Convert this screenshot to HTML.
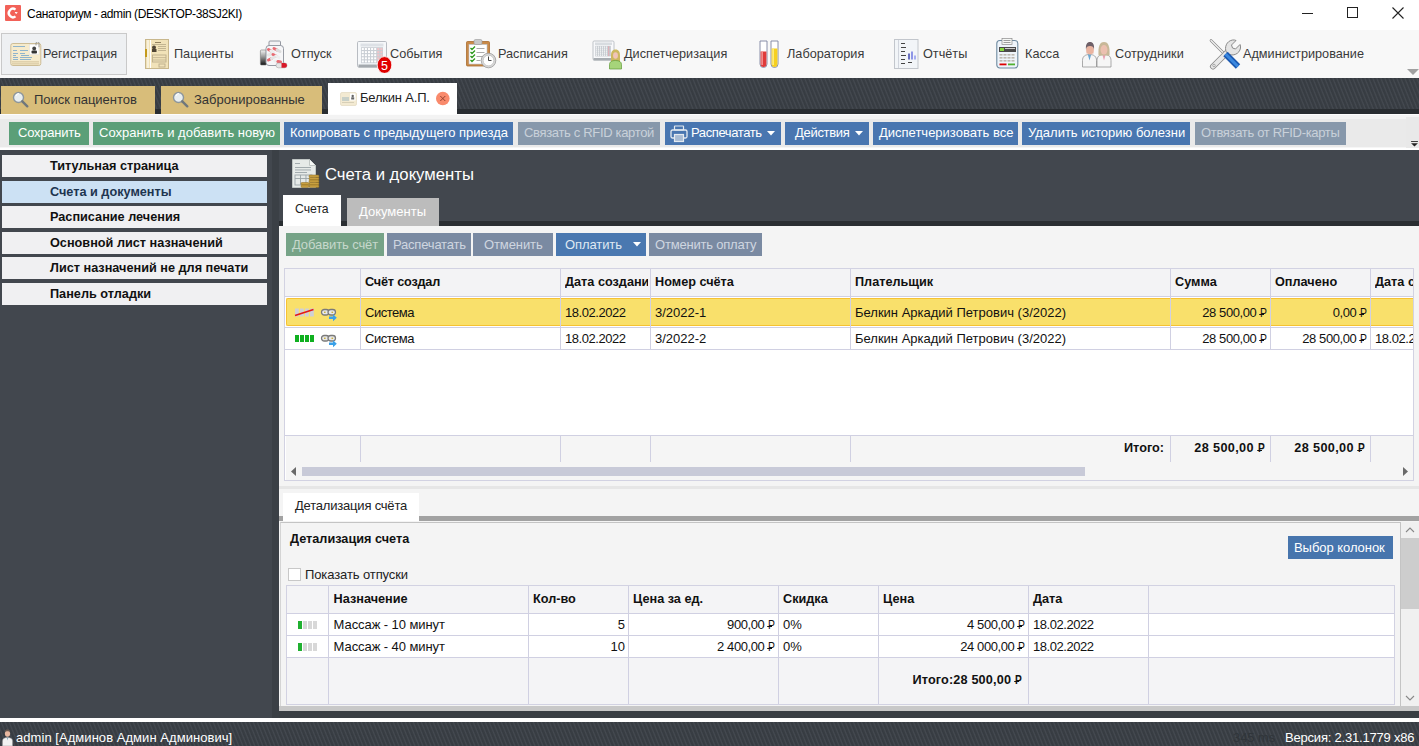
<!DOCTYPE html>
<html><head><meta charset="utf-8">
<style>
*{margin:0;padding:0;box-sizing:border-box}
html,body{width:1419px;height:746px;overflow:hidden;background:#42474e;font-family:"Liberation Sans",sans-serif;font-size:13px;color:#111}
.a{position:absolute}
.t{position:absolute;white-space:nowrap;line-height:1}
#title{left:0;top:0;width:1419px;height:30px;background:#fff}
#ribbon{left:0;top:30px;width:1419px;height:48px;background:#f8f8f8}
.stripes{background:repeating-linear-gradient(68deg,#363b41 0px,#393e44 1.6px,#454a51 2.6px,#393e44 3.71px)}
#band{left:0;top:78px;width:1419px;height:36px}
#band .bot{left:0;top:31px;width:1419px;height:5px;background:#292d31}
.tab{position:absolute;background:#d8bd7a;height:28px;top:86px}
#toolbar{left:0;top:114px;width:1419px;height:36px;background:linear-gradient(#fdfdfd 0,#fdfdfd 1px,#f3f3f3 1px,#f3f3f3 5px,#eaeaea 5px,#eaeaea 33px,#f6f6f6 33px,#f6f6f6 34px,#fff 34px)}
.btn{position:absolute;height:23px;top:122px;color:#fff;font-size:13px;line-height:21px;white-space:nowrap}
.g{background:#5b9f78}
.b{background:#4976b0}
.gr{background:#8798ab;color:#c9d1da}
.nav{position:absolute;left:2px;width:265px;height:22px;background:#f0f0f2;font-weight:bold;font-size:12.7px;line-height:22px;padding-left:48px;color:#111}
.grid{position:absolute;border:1px solid #d0d0e2;background:#fff}
.hl{position:absolute;background:#d0d0e2}
.hb{font-weight:bold;font-size:12.7px}
.rub{position:relative;display:inline-block;margin-left:0.6px;width:0.52em;transform:scaleX(0.8);transform-origin:0 0;letter-spacing:0}
.rub::after{content:"";position:absolute;left:-0.1em;width:0.5em;top:0.62em;height:0.085em;min-height:1px;background:currentColor}
.rt{top:18px;font-size:12.7px;color:#3a3a3a}
</style></head><body>

<!-- TITLE BAR -->
<div id="title" class="a">
  <div class="a" style="left:5px;top:5px;width:16px;height:16px;background:#f26158;border-radius:1px"></div>
  <svg class="a" style="left:5px;top:5px" width="16" height="16" viewBox="0 0 16 16"><path d="M10.5 4.6 A4.2 4.2 0 1 0 10.5 11.4" fill="none" stroke="#fff" stroke-width="2.4"/><path d="M11.2 7.2c.5-.6 1.6-.3 1.3.6l-1.3 1.2-1.3-1.2c-.3-.9.8-1.2 1.3-.6z" fill="#fff"/></svg>
  <div class="t" style="left:27px;top:8px;font-size:12px;color:#000;letter-spacing:-0.4px">Санаториум - admin (DESKTOP-38SJ2KI)</div>
  <div class="a" style="left:1302px;top:13px;width:11px;height:1px;background:#222"></div>
  <div class="a" style="left:1347px;top:7px;width:11px;height:11px;border:1px solid #222"></div>
  <svg class="a" style="left:1392px;top:7px" width="12" height="12" viewBox="0 0 12 12"><path d="M0.5 0.5L11.5 11.5M11.5 0.5L0.5 11.5" stroke="#222" stroke-width="1.1"/></svg>
</div>

<!-- RIBBON -->
<div id="ribbon" class="a">
  <div class="a" style="left:1px;top:3px;width:126px;height:42px;background:#eef0f2;border:1px solid #c9c9c9"></div>
  <!-- reg icon -->
  <svg class="a" style="left:10px;top:12px" width="32" height="25" viewBox="0 0 32 25">
    <rect x="0.8" y="1.5" width="30" height="22" rx="2" fill="#f6ebcc" stroke="#cdbd96" stroke-width="1"/>
    <rect x="3" y="4" width="12" height="1" fill="#8fb4cc"/>
    <rect x="3" y="8" width="4" height="1" fill="#8fb4cc"/><rect x="10" y="8" width="8" height="1" fill="#8fb4cc"/>
    <rect x="3" y="11" width="5" height="1" fill="#8fb4cc"/><rect x="10" y="11" width="5" height="1" fill="#8fb4cc"/>
    <rect x="3" y="13" width="3" height="1" fill="#8fb4cc"/><rect x="11" y="13" width="8" height="1" fill="#8fb4cc"/>
    <rect x="3" y="15" width="5" height="1" fill="#8fb4cc"/><rect x="10" y="15" width="12" height="1" fill="#8fb4cc"/>
    <rect x="3" y="17" width="5" height="1" fill="#8fb4cc"/><rect x="10" y="17" width="11" height="1" fill="#8fb4cc"/>
    <rect x="2" y="19.5" width="27" height="0.8" fill="#c9b88e"/><rect x="2" y="21.5" width="27" height="0.8" fill="#c9b88e"/>
    <rect x="19.5" y="2.5" width="9.5" height="10" fill="#fff" stroke="#ddd" stroke-width="0.5"/>
    <circle cx="24.2" cy="6.5" r="1.9" fill="#444"/><rect x="21.5" y="8.5" width="5.5" height="3" rx="1" fill="#333"/>
    <path d="M26 3.5v-2.2a1.5 1.5 0 0 1 3 0v4" fill="none" stroke="#888" stroke-width="0.8"/>
  </svg>
  <div class="t rt" style="left:43px">Регистрация</div>
  <!-- patients -->
  <svg class="a" style="left:145px;top:9px" width="24" height="30" viewBox="0 0 24 30">
    <rect x="0.5" y="0.5" width="23" height="29" fill="#f1e2b8" stroke="#c8b78c" stroke-width="1"/>
    <rect x="2.5" y="1" width="1" height="28" fill="#fff"/><rect x="5" y="1" width="1" height="28" fill="#fff"/>
    <rect x="-0.5" y="10" width="2.5" height="8" fill="#c49a1c"/>
    <rect x="10" y="3" width="6" height="0.8" fill="#7a6a4a"/>
    <rect x="7" y="5" width="14" height="0.8" fill="#b8aa88"/>
    <circle cx="9" cy="8.5" r="2" fill="#4e4434"/><rect x="7" y="10" width="4.5" height="3" fill="#4e4434"/>
    <rect x="13" y="7" width="8" height="0.8" fill="#b8aa88"/><rect x="13" y="9" width="8" height="0.8" fill="#b8aa88"/><rect x="13" y="11" width="8" height="0.8" fill="#b8aa88"/>
    <rect x="7.5" y="16" width="13.5" height="7" fill="none" stroke="#bcae8c" stroke-width="0.9"/>
    <rect x="7.5" y="18.3" width="13.5" height="0.8" fill="#bcae8c"/><rect x="7.5" y="20.6" width="13.5" height="0.8" fill="#bcae8c"/>
    <rect x="14" y="25" width="6" height="3" fill="none" stroke="#bcae8c" stroke-width="0.9"/>
  </svg>
  <div class="t rt" style="left:174px">Пациенты</div>
  <!-- otpusk (pills jar) -->
  <svg class="a" style="left:259px;top:10px" width="30" height="30" viewBox="0 0 30 30">
    <defs><linearGradient id="bg1" x1="0" y1="0" x2="0" y2="1"><stop offset="0" stop-color="#f4f4f4"/><stop offset="0.45" stop-color="#999"/><stop offset="1" stop-color="#111"/></linearGradient></defs>
    <rect x="1.4" y="10" width="6" height="15" rx="1" fill="url(#bg1)" stroke="#777" stroke-width="0.6"/>
    <rect x="10" y="1" width="11.5" height="5.5" rx="1" fill="#f2f2f4" stroke="#8a8f99" stroke-width="0.9"/>
    <rect x="7" y="5.5" width="17.5" height="20" rx="3" fill="#f6f6f8" stroke="#8a8f99" stroke-width="0.9"/>
    <g stroke-linecap="round" stroke-width="3">
      <path d="M9.5 9.5l2.5 1.5" stroke="#e86a72"/><path d="M12 11l2.5 1.5" stroke="#eee"/>
      <path d="M15 8.5l3 1.5" stroke="#e86a72"/><path d="M18 10l3 1.5" stroke="#ddd"/>
      <path d="M9.5 15l3 -1" stroke="#e8e8e8"/><path d="M14 14.5l3 1.5" stroke="#e86a72"/><path d="M17 16l3 1.5" stroke="#eee"/>
      <path d="M9.5 20l3 -1.5" stroke="#e86a72"/><path d="M12.5 18.5l3 -1.5" stroke="#e4e4e4"/>
      <path d="M16 21l3 .5" stroke="#eee"/><path d="M19 21.5l2.5 .5" stroke="#e86a72"/>
    </g>
    <rect x="17" y="23" width="11" height="4.8" rx="2.4" fill="#e6e6e6" stroke="#999" stroke-width="0.5"/>
    <path d="M22.5 23h3.1a2.4 2.4 0 0 1 0 4.8h-3.1z" fill="#d81828"/>
  </svg>
  <div class="t rt" style="left:291px">Отпуск</div>
  <!-- events calendar -->
  <svg class="a" style="left:357px;top:11px" width="36" height="32" viewBox="0 0 36 32">
    <rect x="0.5" y="0.5" width="29" height="25.5" rx="1.2" fill="#f6f8fa" stroke="#b8bcc2" stroke-width="1"/>
    <rect x="1.5" y="23.5" width="27.5" height="3" fill="#a4a9ae"/>
    <rect x="3.5" y="2.5" width="23" height="3" fill="#dde1e6"/>
    <rect x="4" y="6.2" width="22" height="16" fill="#c9ced4"/>
    <rect x="4.8" y="7.0" width="2" height="2" fill="#fff"/><rect x="7.9" y="7.0" width="2" height="2" fill="#fff"/><rect x="11.0" y="7.0" width="2" height="2" fill="#fff"/><rect x="14.1" y="7.0" width="2" height="2" fill="#fff"/><rect x="17.2" y="7.0" width="2" height="2" fill="#fff"/><rect x="20.3" y="7.0" width="2" height="2" fill="#f2c4c8"/><rect x="23.4" y="7.0" width="2" height="2" fill="#f2c4c8"/><rect x="4.8" y="10.1" width="2" height="2" fill="#fff"/><rect x="7.9" y="10.1" width="2" height="2" fill="#fff"/><rect x="11.0" y="10.1" width="2" height="2" fill="#fff"/><rect x="14.1" y="10.1" width="2" height="2" fill="#fff"/><rect x="17.2" y="10.1" width="2" height="2" fill="#fff"/><rect x="20.3" y="10.1" width="2" height="2" fill="#f2c4c8"/><rect x="23.4" y="10.1" width="2" height="2" fill="#f2c4c8"/><rect x="4.8" y="13.2" width="2" height="2" fill="#fff"/><rect x="7.9" y="13.2" width="2" height="2" fill="#fff"/><rect x="11.0" y="13.2" width="2" height="2" fill="#fff"/><rect x="14.1" y="13.2" width="2" height="2" fill="#fff"/><rect x="17.2" y="13.2" width="2" height="2" fill="#fff"/><rect x="20.3" y="13.2" width="2" height="2" fill="#f2c4c8"/><rect x="23.4" y="13.2" width="2" height="2" fill="#f2c4c8"/><rect x="4.8" y="16.3" width="2" height="2" fill="#fff"/><rect x="7.9" y="16.3" width="2" height="2" fill="#fff"/><rect x="11.0" y="16.3" width="2" height="2" fill="#fff"/><rect x="14.1" y="16.3" width="2" height="2" fill="#fff"/><rect x="17.2" y="16.3" width="2" height="2" fill="#fff"/><rect x="20.3" y="16.3" width="2" height="2" fill="#f2c4c8"/><rect x="23.4" y="16.3" width="2" height="2" fill="#f2c4c8"/><rect x="4.8" y="19.4" width="2" height="2" fill="#fff"/><rect x="7.9" y="19.4" width="2" height="2" fill="#fff"/><rect x="11.0" y="19.4" width="2" height="2" fill="#fff"/><rect x="14.1" y="19.4" width="2" height="2" fill="#fff"/><rect x="17.2" y="19.4" width="2" height="2" fill="#fff"/><rect x="20.3" y="19.4" width="2" height="2" fill="#f2c4c8"/><rect x="23.4" y="19.4" width="2" height="2" fill="#f2c4c8"/>
    <ellipse cx="27.5" cy="24" rx="7.3" ry="8.4" fill="#e00000" stroke="#fff" stroke-width="0.8"/>
    <text x="27.6" y="28.6" font-family="Liberation Sans" font-size="12.5" fill="#fff" text-anchor="middle">5</text>
  </svg>
  <div class="t rt" style="left:390px">События</div>
  <!-- schedule clipboard -->
  <svg class="a" style="left:466px;top:9px" width="32" height="30" viewBox="0 0 32 30">
    <rect x="0.5" y="2.5" width="23" height="24.5" rx="1" fill="#c98a48" stroke="#a86c30" stroke-width="0.8"/>
    <rect x="3" y="5.5" width="18" height="19.5" fill="#fff" stroke="#b9c4d0" stroke-width="0.6"/>
    <rect x="8" y="0.5" width="8" height="5" rx="1.5" fill="#c8c8c8" stroke="#999" stroke-width="0.6"/>
    <path d="M4.5 9l1.5 1.5 3-3M4.5 13l1.5 1.5 3-3M4.5 17l1.5 1.5 3-3M4.5 21l1.5 1.5 3-3" fill="none" stroke="#2e9a1e" stroke-width="1.3"/>
    <rect x="10.5" y="9" width="8" height="1" fill="#aaa"/><rect x="10.5" y="13" width="8" height="1" fill="#aaa"/><rect x="10.5" y="17" width="7" height="1" fill="#aaa"/><rect x="10.5" y="21" width="4" height="1" fill="#aaa"/>
    <circle cx="22.5" cy="21.5" r="7.3" fill="#d8d8d8" stroke="#999" stroke-width="0.8"/>
    <circle cx="22.5" cy="21.5" r="5.3" fill="#fff" stroke="#aaa" stroke-width="0.5"/>
    <path d="M22.5 17.5v4h3" fill="none" stroke="#333" stroke-width="0.9"/>
  </svg>
  <div class="t rt" style="left:498px">Расписания</div>
  <!-- dispatch -->
  <svg class="a" style="left:592px;top:10px" width="32" height="30" viewBox="0 0 32 30">
    <rect x="1" y="1" width="21" height="19" rx="1.2" fill="#f8f9fb" stroke="#b8bcc2" stroke-width="0.9"/>
    <rect x="1.5" y="18" width="20" height="2.5" fill="#a8adb2"/>
    <rect x="3" y="2.5" width="17" height="2.5" fill="#d8dce0"/>
    <rect x="3.3" y="5.8" width="15.5" height="10.6" fill="#c3c8ce"/>
    <rect x="4" y="6.5" width="1.2" height="1.2" fill="#fff"/><rect x="6" y="6.5" width="1.2" height="1.2" fill="#fff"/><rect x="8" y="6.5" width="1.2" height="1.2" fill="#fff"/><rect x="10" y="6.5" width="1.2" height="1.2" fill="#fff"/><rect x="12" y="6.5" width="1.2" height="1.2" fill="#fff"/><rect x="14" y="6.5" width="1.2" height="1.2" fill="#fff"/><rect x="16" y="6.5" width="1.2" height="1.2" fill="#f0a0a8"/><rect x="4" y="8.5" width="1.2" height="1.2" fill="#fff"/><rect x="6" y="8.5" width="1.2" height="1.2" fill="#fff"/><rect x="8" y="8.5" width="1.2" height="1.2" fill="#fff"/><rect x="10" y="8.5" width="1.2" height="1.2" fill="#fff"/><rect x="12" y="8.5" width="1.2" height="1.2" fill="#fff"/><rect x="14" y="8.5" width="1.2" height="1.2" fill="#fff"/><rect x="16" y="8.5" width="1.2" height="1.2" fill="#f0a0a8"/><rect x="4" y="10.5" width="1.2" height="1.2" fill="#fff"/><rect x="6" y="10.5" width="1.2" height="1.2" fill="#fff"/><rect x="8" y="10.5" width="1.2" height="1.2" fill="#fff"/><rect x="10" y="10.5" width="1.2" height="1.2" fill="#fff"/><rect x="12" y="10.5" width="1.2" height="1.2" fill="#fff"/><rect x="14" y="10.5" width="1.2" height="1.2" fill="#fff"/><rect x="16" y="10.5" width="1.2" height="1.2" fill="#f0a0a8"/><rect x="4" y="12.5" width="1.2" height="1.2" fill="#fff"/><rect x="6" y="12.5" width="1.2" height="1.2" fill="#fff"/><rect x="8" y="12.5" width="1.2" height="1.2" fill="#fff"/><rect x="10" y="12.5" width="1.2" height="1.2" fill="#fff"/><rect x="12" y="12.5" width="1.2" height="1.2" fill="#fff"/><rect x="14" y="12.5" width="1.2" height="1.2" fill="#fff"/><rect x="16" y="12.5" width="1.2" height="1.2" fill="#f0a0a8"/><rect x="4" y="14.5" width="1.2" height="1.2" fill="#fff"/><rect x="6" y="14.5" width="1.2" height="1.2" fill="#fff"/><rect x="8" y="14.5" width="1.2" height="1.2" fill="#fff"/><rect x="10" y="14.5" width="1.2" height="1.2" fill="#fff"/><rect x="12" y="14.5" width="1.2" height="1.2" fill="#fff"/><rect x="14" y="14.5" width="1.2" height="1.2" fill="#fff"/><rect x="16" y="14.5" width="1.2" height="1.2" fill="#f0a0a8"/>
    <path d="M23.5 9.5c-3.2 0-4.5 2.5-4.5 6v6.5h9v-6.5c0-3.5-1.3-6-4.5-6z" fill="#cdb860"/>
    <ellipse cx="23.5" cy="15.5" rx="2.4" ry="3.3" fill="#f0c4b8"/>
    <path d="M17.5 29v-4.5c0-2.5 2-4 6-4s6 1.5 6 4v4.5z" fill="#a6d47a" stroke="#5e9a38" stroke-width="0.7"/>
  </svg>
  <div class="t rt" style="left:624px">Диспетчеризация</div>
  <!-- lab tubes -->
  <svg class="a" style="left:759px;top:10px" width="21" height="29" viewBox="0 0 21 29">
    <path d="M1 1h7v23a3.5 3.5 0 0 1-7 0z" fill="#fff" stroke="#7d83a0" stroke-width="0.9"/>
    <path d="M12 1h7v23a3.5 3.5 0 0 1-7 0z" fill="#fff" stroke="#7d83a0" stroke-width="0.9"/>
    <path d="M1.6 11.5h5.8v12.5a2.9 2.9 0 0 1-5.8 0z" fill="#e03a3a"/>
    <path d="M12.6 8.5h5.8v15.5a2.9 2.9 0 0 1-5.8 0z" fill="#f6d020"/>
    <rect x="2.5" y="12" width="1.2" height="13" fill="#f7b0b0"/><rect x="13.5" y="9" width="1.2" height="16" fill="#fff7a0"/>
  </svg>
  <div class="t rt" style="left:787px">Лаборатория</div>
  <!-- reports -->
  <svg class="a" style="left:894px;top:9px" width="25" height="30" viewBox="0 0 25 30">
    <rect x="0.5" y="0.5" width="23.5" height="29" fill="#f2f5f8" stroke="#c2c6cc" stroke-width="1"/>
    <rect x="4" y="1" width="0.8" height="28" fill="#c8ced6"/>
    <g fill="#444"><rect x="7" y="4" width="4" height="1"/><rect x="7" y="8" width="5" height="1"/><rect x="7" y="12" width="4" height="1"/><rect x="7" y="16" width="5" height="1"/><rect x="7" y="20" width="4" height="1"/><rect x="7" y="24" width="4" height="1"/><rect x="14" y="23" width="4" height="1"/></g>
    <rect x="14" y="14.5" width="2" height="6" fill="#6870c0"/><rect x="17" y="12.5" width="2" height="8" fill="#8e96e6"/><rect x="20" y="16.5" width="2" height="4" fill="#a8aef0"/>
  </svg>
  <div class="t rt" style="left:923px">Отчёты</div>
  <!-- kassa -->
  <svg class="a" style="left:996px;top:8px" width="23" height="31" viewBox="0 0 23 31">
    <rect x="0.8" y="2.5" width="21" height="27.5" rx="3" fill="#eef4fa" stroke="#6e8aa0" stroke-width="1.1"/>
    <rect x="6" y="0.5" width="10" height="6" fill="#f6f8f6" stroke="#8a8a8a" stroke-width="0.7"/>
    <rect x="7.5" y="2" width="7" height="0.8" fill="#888"/><rect x="7.5" y="4" width="7" height="0.8" fill="#888"/>
    <rect x="3" y="9" width="17" height="5" fill="#4a4a4a"/><rect x="4" y="10" width="4" height="3" fill="#86d640"/><rect x="9" y="10" width="10" height="1" fill="#ccc"/>
    <g fill="#bdb8b0"><rect x="3.5" y="16" width="3" height="1.6"/><rect x="7.5" y="16" width="3" height="1.6"/><rect x="11.5" y="16" width="3" height="1.6"/><rect x="15.5" y="16" width="3" height="1.6"/>
    <rect x="3.5" y="19" width="3" height="1.6"/><rect x="7.5" y="19" width="3" height="1.6"/><rect x="11.5" y="19" width="3" height="1.6"/><rect x="15.5" y="19" width="3" height="1.6"/>
    <rect x="3.5" y="22" width="3" height="1.6"/><rect x="7.5" y="22" width="3" height="1.6"/><rect x="11.5" y="22" width="3" height="1.6"/><rect x="15.5" y="22" width="3" height="1.6"/></g>
    <rect x="3.5" y="25.5" width="7" height="1.8" fill="#d00"/><rect x="12" y="25.5" width="7" height="1.8" fill="#50b030"/>
  </svg>
  <div class="t rt" style="left:1025px">Касса</div>
  <!-- staff -->
  <svg class="a" style="left:1082px;top:11px" width="30" height="27" viewBox="0 0 30 27">
    <path d="M0.5 26v-6.5c0-4 2.5-6 7-6s7 2 7 6v6.5z" fill="#f6f6f6" stroke="#8a8a8a" stroke-width="0.7"/>
    <path d="M5.8 13.5h3.4l-1.7 6z" fill="#6aa6d0"/>
    <path d="M4.5 12.5c0-6 1-9.5 3.5-9.5s3.5 3.5 3.5 9.5z" fill="#e8aa94"/>
    <ellipse cx="8" cy="8.5" rx="3.8" ry="5" fill="#eab4a0"/>
    <path d="M4 8.5c-.5-5 1-7.5 4-7.5s4.5 2.5 4 7.5c-.3-2.5-1.5-3.5-4-3.5s-3.7 1-4 3.5z" fill="#6e6068"/>
    <path d="M15 26v-6.5c0-4 2.5-6 7-6s7 2 7 6v6.5z" fill="#f6f6f6" stroke="#8a8a8a" stroke-width="0.7"/>
    <path d="M20.3 13.5h3.4l-1.7 6z" fill="#e8a0b4"/>
    <path d="M16.5 14.5c-.5-9 1-13.5 5.5-13.5s6 4.5 5.5 13.5z" fill="#c8b898"/>
    <ellipse cx="22" cy="8.8" rx="3.5" ry="4.8" fill="#ecc0b0"/>
  </svg>
  <div class="t rt" style="left:1115px">Сотрудники</div>
  <!-- admin tools -->
  <svg class="a" style="left:1209px;top:8px" width="34" height="32" viewBox="0 0 34 32">
    <path d="M2 2.5l14.5 14.5" stroke="#8a8a8a" stroke-width="2.6" stroke-linecap="round"/>
    <path d="M2 2.5l14.5 14.5" stroke="#f4f4f4" stroke-width="1.2" stroke-linecap="round"/>
    <path d="M4 28.5L19.5 13" stroke="#8a8a8a" stroke-width="6" stroke-linecap="round"/>
    <path d="M4 28.5L19.5 13" stroke="#e8e8e8" stroke-width="4.4" stroke-linecap="round"/>
    <circle cx="5" cy="27.5" r="1.3" fill="none" stroke="#999" stroke-width="0.8"/>
    <path d="M17.5 14.5c-2.5-5 0-11.5 6-12.5 1.5-.2 2.5 0 3.5.5l-4.5 4.5 1 3 3 1 4.5-4.5c.5 1 .7 2 .5 3.5-1 6-7.5 8.5-12.5 6z" fill="#e4e4e4" stroke="#8a8a8a" stroke-width="1"/>
    <path d="M16.5 16l12.5 12.5" stroke="#1a58b0" stroke-width="6.2" stroke-linecap="butt"/>
    <path d="M16.5 16l12.5 12.5" stroke="#3a88e0" stroke-width="3" stroke-linecap="butt"/>
  </svg>
  <div class="t rt" style="left:1243px">Администрирование</div>
  <svg class="a" style="left:1407px;top:39px" width="12" height="6" viewBox="0 0 12 6"><path d="M0 0h12l-6 6z" fill="#a0a0a0"/></svg>
</div>

<!-- DARK BAND WITH TABS -->
<div id="band" class="a stripes"><div class="a bot"></div></div>
<div class="tab" style="left:1px;width:154px"></div>
<svg class="a" style="left:12px;top:91px" width="17" height="17" viewBox="0 0 17 17"><circle cx="6.5" cy="6.5" r="5" fill="#e8eef0" stroke="#8d969c" stroke-width="1.4"/><path d="M10.3 10.3l5 5" stroke="#6f777c" stroke-width="2.4" stroke-linecap="round"/><path d="M4 5a3 3 0 0 1 3-2.5" stroke="#fff" stroke-width="1" fill="none"/></svg>
<div class="t" style="left:34px;top:93px;font-size:13px;color:#333">Поиск пациентов</div>
<div class="tab" style="left:161px;width:161px"></div>
<svg class="a" style="left:172px;top:91px" width="17" height="17" viewBox="0 0 17 17"><circle cx="6.5" cy="6.5" r="5" fill="#e8eef0" stroke="#8d969c" stroke-width="1.4"/><path d="M10.3 10.3l5 5" stroke="#6f777c" stroke-width="2.4" stroke-linecap="round"/><path d="M4 5a3 3 0 0 1 3-2.5" stroke="#fff" stroke-width="1" fill="none"/></svg>
<div class="t" style="left:194px;top:93px;font-size:13px;color:#333">Забронированные</div>
<div class="a" style="left:328px;top:83px;width:129px;height:31px;background:#fff"></div>
<svg class="a" style="left:340px;top:92px" width="17" height="14" viewBox="0 0 17 14"><rect x="0.5" y="0.5" width="16" height="13" rx="1.5" fill="#f3ead2" stroke="#e4dcc4" stroke-width="0.8"/><rect x="2" y="5" width="7" height="4" fill="#c8d0c8"/><rect x="2" y="10" width="12" height="0.9" fill="#d4ccb4"/><rect x="10" y="1.5" width="5.5" height="7" fill="#fff"/><circle cx="12.7" cy="4" r="1.2" fill="#666"/><rect x="11.2" y="5.3" width="3" height="2.2" fill="#666"/></svg>
<div class="t" style="left:360px;top:91px;font-size:13px;color:#222;letter-spacing:-0.2px">Белкин А.П.</div>
<svg class="a" style="left:435px;top:91px" width="15" height="15" viewBox="0 0 15 15"><circle cx="7.8" cy="7.5" r="6.8" fill="#f98a6c"/><path d="M5.3 5l5 5M10.3 5l-5 5" stroke="#8a3a28" stroke-width="0.9"/></svg>

<!-- TOOLBAR -->
<div id="toolbar" class="a"></div>
<div class="btn g" style="left:9px;width:80px;padding-left:9px;letter-spacing:-0.23px">Сохранить</div>
<div class="btn g" style="left:93px;width:187px;padding-left:6px">Сохранить и добавить новую</div>
<div class="btn b" style="left:284px;width:229px;padding-left:6px">Копировать с предыдущего приезда</div>
<div class="btn gr" style="left:518px;width:142px;padding-left:6px;letter-spacing:-0.33px">Связать с RFID картой</div>
<div class="btn b" style="left:665px;width:116px;padding-left:26px;letter-spacing:-0.4px">Распечатать</div>
<svg class="a" style="left:670px;top:125px" width="18" height="18" viewBox="0 0 18 18"><rect x="4.5" y="1" width="9" height="4" rx="0.5" fill="none" stroke="#e4eaf0" stroke-width="1.2"/><path d="M4 13H2.5a1.5 1.5 0 0 1-1.5-1.5v-5A1.5 1.5 0 0 1 2.5 5h13A1.5 1.5 0 0 1 17 6.5v5a1.5 1.5 0 0 1-1.5 1.5H14" fill="none" stroke="#e4eaf0" stroke-width="1.3"/><rect x="4.5" y="9.5" width="9" height="7" fill="#a8bcd4" stroke="#e4eaf0" stroke-width="1.2"/></svg>
<svg class="a" style="left:767px;top:131px" width="8" height="5" viewBox="0 0 8 5"><path d="M0 0h8l-4 4.5z" fill="#fff"/></svg>
<div class="btn b" style="left:785px;width:84px;padding-left:10px;letter-spacing:-0.3px">Действия</div>
<svg class="a" style="left:855px;top:131px" width="8" height="5" viewBox="0 0 8 5"><path d="M0 0h8l-4 4.5z" fill="#fff"/></svg>
<div class="btn b" style="left:873px;width:145px;padding-left:6px">Диспетчеризовать все</div>
<div class="btn b" style="left:1022px;width:168px;padding-left:6px">Удалить историю болезни</div>
<div class="btn gr" style="left:1195px;width:151px;padding-left:6px;letter-spacing:-0.33px">Отвязать от RFID-карты</div>
<div class="a" style="left:1406px;top:117px;width:13px;height:31px;background:#e9e9e9"></div>
<svg class="a" style="left:1411px;top:141px" width="7" height="6" viewBox="0 0 8 7"><rect x="0" y="0" width="8" height="1" fill="#222"/><path d="M0 2.5h8l-4 4z" fill="#222"/></svg>

<!-- LEFT NAV -->
<div class="nav" style="top:155px">Титульная страница</div>
<div class="nav" style="top:181px;background:#cce1f4;color:#1e3550">Счета и документы</div>
<div class="nav" style="top:206px">Расписание лечения</div>
<div class="nav" style="top:232px">Основной лист назначений</div>
<div class="nav" style="top:257px">Лист назначений не для печати</div>
<div class="nav" style="top:283px">Панель отладки</div>

<!-- CONTENT -->
<div class="a" style="left:272px;top:150px;width:7px;height:568px;background:#3b4046"></div>
<div class="a" style="left:279px;top:226px;width:1140px;height:480px;background:#f4f4f4"></div>
<svg class="a" style="left:291px;top:158px" width="29" height="32" viewBox="0 0 29 32">
<path d="M1.5 1.5h17l6 6v22h-23z" fill="#e6eae8" stroke="#c0c6c4" stroke-width="1"/><path d="M18.5 1.5v6h6" fill="#f6f8f6" stroke="#c0c6c4" stroke-width="1"/>
<g fill="#9aa4a8"><rect x="4" y="5" width="5" height="0.9"/><rect x="4" y="9" width="16" height="0.9"/><rect x="4" y="11.5" width="16" height="0.9"/><rect x="4" y="14" width="12" height="0.9"/></g>
<rect x="4" y="17" width="17" height="10" fill="none" stroke="#9aa4a8" stroke-width="0.9"/><rect x="4" y="20" width="17" height="0.9" fill="#9aa4a8"/><rect x="9" y="17" width="0.9" height="10" fill="#9aa4a8"/><rect x="14.5" y="17" width="0.9" height="10" fill="#9aa4a8"/>
<g fill="#c8a040" stroke="#8a6a20" stroke-width="0.5"><rect x="18" y="19.5" width="10" height="2.4" rx="1"/><rect x="18" y="22" width="10" height="2.4" rx="1"/><rect x="18" y="24.5" width="10" height="2.4" rx="1"/><rect x="18" y="27" width="10" height="2.4" rx="1"/><rect x="10" y="24.5" width="8" height="2.4" rx="1"/><rect x="10" y="27" width="8" height="2.4" rx="1"/><rect x="18" y="17" width="10" height="2.4" rx="1"/></g>
</svg>
<div class="t" style="top:166.86px;font-size:16.7px;color:#fff;left:325px;">Счета и документы</div>
<div class="a" style="left:279px;top:221px;width:1140px;height:5px;background:#2a2e32"></div>
<div class="a" style="left:283px;top:195px;width:58px;height:31px;background:#fff"></div>
<div class="t" style="top:203.07px;font-size:12.2px;color:#222;left:295px;">Счета</div>
<div class="a" style="left:347px;top:198px;width:92px;height:28px;background:#bcbcbc"></div>
<div class="t" style="top:204.7px;font-size:13px;color:#fff;left:359px;">Документы</div>
<div class="a" style="left:286px;top:233px;width:98px;height:23px;background:#76a387"></div>
<div class="t" style="top:238px;font-size:13px;color:#c6d8cc;left:292px;letter-spacing:-0.1px">Добавить счёт</div>
<div class="a" style="left:387px;top:233px;width:84px;height:23px;background:#7a8aa2"></div>
<div class="t" style="top:238.0px;font-size:13px;color:#cfd6e0;left:393px;letter-spacing:-0.2px">Распечатать</div>
<div class="a" style="left:473px;top:233px;width:80px;height:23px;background:#7a8aa2"></div>
<div class="t" style="top:238.0px;font-size:13px;color:#cfd6e0;left:484px;letter-spacing:-0.1px">Отменить</div>
<div class="a" style="left:556px;top:233px;width:90px;height:23px;background:#4a78b0"></div>
<div class="t" style="top:238.0px;font-size:13px;color:#dfe8f2;left:565px;letter-spacing:-0.1px">Оплатить</div>
<svg class="a" style="left:633px;top:242px" width="8" height="5" viewBox="0 0 8 5"><path d="M0 0h8l-4 4.5z" fill="#fff"/></svg>
<div class="a" style="left:649px;top:233px;width:113px;height:23px;background:#7a8aa2"></div>
<div class="t" style="top:238.0px;font-size:13px;color:#cfd6e0;left:655px;letter-spacing:-0.2px">Отменить оплату</div>
<div class="a" style="left:284px;top:268px;width:1130px;height:213px;background:#fff;border:1px solid #d2d2e2"></div>
<div class="a" style="left:285px;top:269px;width:1128px;height:27px;background:#f3f3f5"></div>
<div class="hl" style="left:285px;top:296px;width:1128px;height:1px"></div>
<div class="a" style="left:286px;top:298px;width:1127px;height:28px;background:#f9e06b;border:1px solid #f6c232;border-right:none;border-radius:2px 0 0 2px"></div>
<div class="hl" style="left:285px;top:349px;width:1128px;height:1px"></div>
<div class="hl" style="left:285px;top:327px;width:1128px;height:1px"></div>
<div class="hl" style="left:285px;top:435px;width:1128px;height:1px"></div>
<div class="a" style="left:286px;top:436px;width:1127px;height:44px;background:#f5f5f5"></div>
<div class="hl" style="left:360px;top:269px;width:1px;height:81px"></div>
<div class="hl" style="left:360px;top:436px;width:1px;height:26px"></div>
<div class="hl" style="left:560px;top:269px;width:1px;height:81px"></div>
<div class="hl" style="left:560px;top:436px;width:1px;height:26px"></div>
<div class="hl" style="left:650px;top:269px;width:1px;height:81px"></div>
<div class="hl" style="left:650px;top:436px;width:1px;height:26px"></div>
<div class="hl" style="left:850px;top:269px;width:1px;height:81px"></div>
<div class="hl" style="left:850px;top:436px;width:1px;height:26px"></div>
<div class="hl" style="left:1170px;top:269px;width:1px;height:81px"></div>
<div class="hl" style="left:1170px;top:436px;width:1px;height:26px"></div>
<div class="hl" style="left:1270px;top:269px;width:1px;height:81px"></div>
<div class="hl" style="left:1270px;top:436px;width:1px;height:26px"></div>
<div class="hl" style="left:1370px;top:269px;width:1px;height:81px"></div>
<div class="hl" style="left:1370px;top:436px;width:1px;height:26px"></div>
<svg class="a" style="left:290px;top:467px" width="7" height="9" viewBox="0 0 7 9"><path d="M6 0v9L1 4.5z" fill="#6a6a6a"/></svg>
<div class="a" style="left:302px;top:467px;width:783px;height:9px;background:#c8cad8"></div>
<svg class="a" style="left:1402px;top:467px" width="7" height="9" viewBox="0 0 7 9"><path d="M1 0v9L6 4.5z" fill="#6a6a6a"/></svg>
<div class="t" style="top:275.55px;font-size:12.7px;color:#111;font-weight:bold;left:365px;letter-spacing:-0.2px">Счёт создал</div>
<div class="t" style="top:275.55px;font-size:12.7px;color:#111;font-weight:bold;left:565px;width:83px;overflow:hidden;">Дата создани</div>
<div class="t" style="top:275.55px;font-size:12.7px;color:#111;font-weight:bold;left:655px;">Номер счёта</div>
<div class="t" style="top:275.55px;font-size:12.7px;color:#111;font-weight:bold;left:855px;">Плательщик</div>
<div class="t" style="top:275.55px;font-size:12.7px;color:#111;font-weight:bold;left:1175px;">Сумма</div>
<div class="t" style="top:275.55px;font-size:12.7px;color:#111;font-weight:bold;left:1275px;">Оплачено</div>
<div class="t" style="top:275.55px;font-size:12.7px;color:#111;font-weight:bold;left:1375px;width:38px;overflow:hidden;">Дата создания</div>
<div class="t" style="top:306.0px;font-size:13px;color:#111;left:365px;letter-spacing:-0.5px">Система</div>
<div class="t" style="top:306.0px;font-size:13px;color:#111;left:565px;letter-spacing:-0.45px">18.02.2022</div>
<div class="t" style="top:306.0px;font-size:13px;color:#111;left:655px;">3/2022-1</div>
<div class="t" style="top:306.0px;font-size:13px;color:#111;left:855px;letter-spacing:0px">Белкин Аркадий Петрович (3/2022)</div>
<div class="t" style="top:306.0px;font-size:13px;color:#111;right:152px;letter-spacing:-0.4px">28 500,00 <span class="rub">Р</span></div>
<div class="t" style="top:332.0px;font-size:13px;color:#111;left:365px;letter-spacing:-0.5px">Система</div>
<div class="t" style="top:332.0px;font-size:13px;color:#111;left:565px;letter-spacing:-0.45px">18.02.2022</div>
<div class="t" style="top:332.0px;font-size:13px;color:#111;left:655px;">3/2022-2</div>
<div class="t" style="top:332.0px;font-size:13px;color:#111;left:855px;letter-spacing:0px">Белкин Аркадий Петрович (3/2022)</div>
<div class="t" style="top:332.0px;font-size:13px;color:#111;right:152px;letter-spacing:-0.4px">28 500,00 <span class="rub">Р</span></div>
<div class="t" style="top:306.0px;font-size:13px;color:#111;right:52px;letter-spacing:-0.4px">0,00 <span class="rub">Р</span></div>
<div class="t" style="top:332.0px;font-size:13px;color:#111;right:52px;letter-spacing:-0.4px">28 500,00 <span class="rub">Р</span></div>
<div class="t" style="top:332.0px;font-size:13px;color:#111;left:1375px;width:38px;overflow:hidden;letter-spacing:-0.45px">18.02.2022</div>
<div class="t" style="top:441.85px;font-size:12.7px;color:#111;font-weight:bold;right:255px;">Итого:</div>
<div class="t" style="top:441.85px;font-size:12.7px;color:#111;font-weight:bold;right:154px;letter-spacing:0.35px">28 500,00 <span class="rub">Р</span></div>
<div class="t" style="top:441.85px;font-size:12.7px;color:#111;font-weight:bold;right:54px;letter-spacing:0.35px">28 500,00 <span class="rub">Р</span></div>
<svg class="a" style="left:294px;top:307px" width="22" height="12" viewBox="0 0 22 12"><g fill="#cfcfd6"><rect x="1" y="1.5" width="3.8" height="8"/><rect x="6" y="1.5" width="3.8" height="8"/><rect x="11" y="1.5" width="3.8" height="8"/><rect x="16" y="1.5" width="3.8" height="8"/></g><path d="M1 8.5L19.5 2.5" stroke="#e41818" stroke-width="1.8"/></svg>
<svg class="a" style="left:320px;top:308px" width="18" height="14" viewBox="0 0 18 14"><rect x="1.5" y="1.5" width="7.5" height="5.5" rx="2.75" fill="#e8e8e8" stroke="#7a7a7a" stroke-width="1.3"/><rect x="8" y="1.5" width="7.5" height="5.5" rx="2.75" fill="#e8e8e8" stroke="#7a7a7a" stroke-width="1.3"/><rect x="4" y="3.6" width="1.6" height="1.4" fill="#c8b040"/><rect x="11.5" y="3.6" width="1.6" height="1.4" fill="#c8b040"/><path d="M9 8.5h4v-2.2l3.8 3.4-3.8 3.5v-2.2h-4z" fill="#3aa0e8"/></svg>
<svg class="a" style="left:320px;top:334px" width="18" height="14" viewBox="0 0 18 14"><rect x="1.5" y="1.5" width="7.5" height="5.5" rx="2.75" fill="#e8e8e8" stroke="#7a7a7a" stroke-width="1.3"/><rect x="8" y="1.5" width="7.5" height="5.5" rx="2.75" fill="#e8e8e8" stroke="#7a7a7a" stroke-width="1.3"/><rect x="4" y="3.6" width="1.6" height="1.4" fill="#c8b040"/><rect x="11.5" y="3.6" width="1.6" height="1.4" fill="#c8b040"/><path d="M9 8.5h4v-2.2l3.8 3.4-3.8 3.5v-2.2h-4z" fill="#3aa0e8"/></svg>
<svg class="a" style="left:294px;top:334px" width="22" height="10" viewBox="0 0 22 10"><g fill="#10b020"><rect x="1" y="1" width="4" height="7"/><rect x="6" y="1" width="4" height="7"/><rect x="11" y="1" width="4" height="7"/><rect x="16" y="1" width="4" height="7"/></g></svg>
<div class="a" style="left:279px;top:486px;width:1140px;height:3px;background:#e6e6e6"></div>
<div class="a" style="left:279px;top:516px;width:1140px;height:5px;background:#a2a2a2"></div>
<div class="a" style="left:283px;top:493px;width:136px;height:28px;background:#fff"></div>
<div class="t" style="top:498.8px;font-size:13px;color:#222;left:295px;letter-spacing:-0.2px">Детализация счёта</div>
<div class="a" style="left:280px;top:522px;width:1121px;height:185px;background:#f4f4f4;border:1px solid #c4c4c4;border-left:1px solid #d4d4d4"></div>
<div class="a" style="left:279px;top:706px;width:1140px;height:5px;background:#c8c8c8"></div>
<div class="a" style="left:279px;top:711px;width:1140px;height:7px;background:#3a3f44"></div>
<div class="a" style="left:1401px;top:522px;width:18px;height:184px;background:#f0f0f0"></div>
<div class="a" style="left:1401px;top:538px;width:18px;height:71px;background:#cdcdcd"></div>
<svg class="a" style="left:1405px;top:527px" width="10" height="6" viewBox="0 0 10 6"><path d="M1 5l4-4 4 4" fill="none" stroke="#888" stroke-width="1.1"/></svg>
<svg class="a" style="left:1405px;top:695px" width="10" height="6" viewBox="0 0 10 6"><path d="M1 1l4 4 4-4" fill="none" stroke="#888" stroke-width="1.1"/></svg>
<div class="t" style="top:533.4px;font-size:12.7px;color:#111;font-weight:bold;left:290px;letter-spacing:0px">Детализация счета</div>
<div class="a" style="left:288px;top:568px;width:13px;height:13px;background:#fff;border:1px solid #c8c8c8"></div>
<div class="t" style="top:567.7px;font-size:13px;color:#222;left:305px;letter-spacing:-0.1px">Показать отпуски</div>
<div class="a" style="left:1288px;top:536px;width:105px;height:23px;background:#4775ad"></div>
<div class="t" style="top:540.7px;font-size:13px;color:#fff;left:1294px;letter-spacing:-0.05px">Выбор колонок</div>
<div class="a" style="left:286px;top:585px;width:1109px;height:120px;background:#f4f4f6;border:1px solid #d2d2e2"></div>
<div class="a" style="left:287px;top:613px;width:1107px;height:44px;background:#fff"></div>
<div class="hl" style="left:286px;top:613px;width:1108px;height:1px"></div>
<div class="hl" style="left:286px;top:635px;width:1108px;height:1px"></div>
<div class="hl" style="left:286px;top:657px;width:1108px;height:1px"></div>
<div class="hl" style="left:328px;top:586px;width:1px;height:118px"></div>
<div class="hl" style="left:528px;top:586px;width:1px;height:118px"></div>
<div class="hl" style="left:628px;top:586px;width:1px;height:118px"></div>
<div class="hl" style="left:778px;top:586px;width:1px;height:118px"></div>
<div class="hl" style="left:878px;top:586px;width:1px;height:118px"></div>
<div class="hl" style="left:1028px;top:586px;width:1px;height:118px"></div>
<div class="hl" style="left:1148px;top:586px;width:1px;height:118px"></div>
<div class="t" style="top:592.6px;font-size:12.7px;color:#111;font-weight:bold;left:333.6px;">Назначение</div>
<div class="t" style="top:592.6px;font-size:12.7px;color:#111;font-weight:bold;left:533px;">Кол-во</div>
<div class="t" style="top:592.6px;font-size:12.7px;color:#111;font-weight:bold;left:633px;">Цена за ед.</div>
<div class="t" style="top:592.6px;font-size:12.7px;color:#111;font-weight:bold;left:783px;">Скидка</div>
<div class="t" style="top:592.6px;font-size:12.7px;color:#111;font-weight:bold;left:883px;">Цена</div>
<div class="t" style="top:592.6px;font-size:12.7px;color:#111;font-weight:bold;left:1033px;">Дата</div>
<div class="t" style="top:617.5px;font-size:13px;color:#111;left:333.6px;letter-spacing:-0.08px">Массаж - 10 минут</div>
<div class="t" style="top:617.5px;font-size:13px;color:#111;right:794px;">5</div>
<div class="t" style="top:617.5px;font-size:13px;color:#111;right:644px;letter-spacing:-0.4px">900,00 <span class="rub">Р</span></div>
<div class="t" style="top:617.5px;font-size:13px;color:#111;left:783px;">0%</div>
<div class="t" style="top:617.5px;font-size:13px;color:#111;right:394px;letter-spacing:-0.4px">4 500,00 <span class="rub">Р</span></div>
<div class="t" style="top:617.5px;font-size:13px;color:#111;left:1033px;letter-spacing:-0.45px">18.02.2022</div>
<svg class="a" style="left:298px;top:621px" width="20" height="8" viewBox="0 0 20 8"><rect x="0" y="0" width="4" height="8" fill="#20b030"/><rect x="5" y="0" width="4" height="8" fill="#d8d8d8"/><rect x="10" y="0" width="4" height="8" fill="#d8d8d8"/><rect x="15" y="0" width="4" height="8" fill="#d8d8d8"/></svg>
<div class="t" style="top:639.5px;font-size:13px;color:#111;left:333.6px;letter-spacing:-0.08px">Массаж - 40 минут</div>
<div class="t" style="top:639.5px;font-size:13px;color:#111;right:794px;">10</div>
<div class="t" style="top:639.5px;font-size:13px;color:#111;right:644px;letter-spacing:-0.4px">2 400,00 <span class="rub">Р</span></div>
<div class="t" style="top:639.5px;font-size:13px;color:#111;left:783px;">0%</div>
<div class="t" style="top:639.5px;font-size:13px;color:#111;right:394px;letter-spacing:-0.4px">24 000,00 <span class="rub">Р</span></div>
<div class="t" style="top:639.5px;font-size:13px;color:#111;left:1033px;letter-spacing:-0.45px">18.02.2022</div>
<svg class="a" style="left:298px;top:643px" width="20" height="8" viewBox="0 0 20 8"><rect x="0" y="0" width="4" height="8" fill="#20b030"/><rect x="5" y="0" width="4" height="8" fill="#d8d8d8"/><rect x="10" y="0" width="4" height="8" fill="#d8d8d8"/><rect x="15" y="0" width="4" height="8" fill="#d8d8d8"/></svg>
<div class="t" style="top:673.55px;font-size:12.7px;color:#111;font-weight:bold;right:397px;letter-spacing:0.15px">Итого:28 500,00 <span class="rub">Р</span></div>

<!-- STATUS -->
<div class="a" style="left:0;top:718px;width:1419px;height:4px;background:#fff"></div>
<div class="a stripes" style="left:0;top:722px;width:1419px;height:24px"></div>
<svg class="a" style="left:2px;top:729px" width="11" height="17" viewBox="0 0 11 17"><ellipse cx="5.5" cy="4.5" rx="2.6" ry="3.2" fill="#e8b8a0"/><path d="M3 3.5c0-2.5 1-3 2.5-3s2.5.5 2.5 3c-.5-1-1.5-1.3-2.5-1.3S3.5 2.5 3 3.5z" fill="#6a5a50"/><path d="M0.5 17v-5c0-2 1.5-3.5 5-3.5s5 1.5 5 3.5v5z" fill="#f2f2f2" stroke="#999" stroke-width="0.5"/><path d="M4.7 8.5h1.6l-.8 3z" fill="#8ab"/></svg>
<div class="t" style="left:16px;top:731.3px;font-size:13px;color:#fff;letter-spacing:0.05px">admin [Админов Админ Админович]</div>
<div class="t" style="left:1233px;top:731.3px;font-size:13px;color:#30353a;letter-spacing:-0.1px">345 ms</div>
<div class="t" style="left:1285px;top:731.3px;font-size:13px;color:#fff;letter-spacing:-0.2px">Версия: 2.31.1779 x86</div>

</body></html>
